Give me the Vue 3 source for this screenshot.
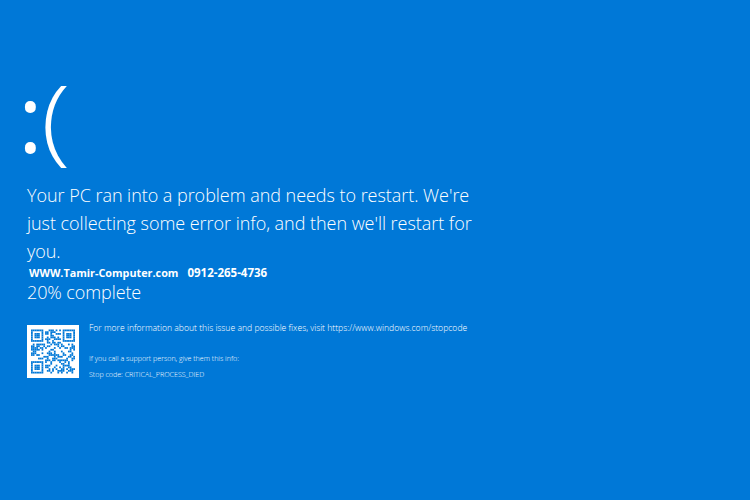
<template>
  <main class="screen">
    <div class="face"><span class="colon">:</span><span class="paren">(</span></div>
    <p class="message">Your PC ran into a problem and needs to restart. We're<br>just collecting some error info, and then we'll restart for<br>you.</p>
    <p class="contact"><span>WWW.Tamir-Computer.com</span><span class="phone">0912-265-4736</span></p>
    <p class="progress">20% complete</p>
    <section class="details">
      <div class="qr">
        <svg viewBox="0 0 25 25" shape-rendering="geometricPrecision">
          <rect v-for="c in cells" :key="c.k" :x="c.x" :y="c.y" width="1" height="1" fill="#0078d7" />
        </svg>
      </div>
      <div class="info">
        <p class="more">For more information about this issue and possible fixes, visit https://www.windows.com/stopcode</p>
        <p class="small call">If you call a support person, give them this info:</p>
        <p class="small">Stop code: CRITICAL_PROCESS_DIED</p>
      </div>
    </section>
  </main>
</template>

<script setup>
const SIZE = 25

function inFinder(x, y, ox, oy) {
  return x >= ox && x < ox + 7 && y >= oy && y < oy + 7
}

function finderOn(x, y, ox, oy) {
  const dx = x - ox
  const dy = y - oy
  if (dx === 0 || dx === 6 || dy === 0 || dy === 6) return true
  return dx >= 2 && dx <= 4 && dy >= 2 && dy <= 4
}

// not a real code, just a stable pattern with QR-like density
let seed = 20
function next() {
  seed = (seed * 1103515245 + 12345) & 0x7fffffff
  return (seed >> 16) & 1
}

const cells = []
for (let y = 0; y < SIZE; y++) {
  for (let x = 0; x < SIZE; x++) {
    let on
    const corners = [[0, 0], [18, 0], [0, 18]]
    const hit = corners.find(([ox, oy]) => inFinder(x, y, ox, oy))
    if (hit) on = finderOn(x, y, hit[0], hit[1])
    else if ((x < 8 && y < 8) || (x > 16 && y < 8) || (x < 8 && y > 16)) on = false
    else on = next() === 1
    if (on) cells.push({ k: x + '-' + y, x, y })
  }
}
</script>

<style>
html, body { margin: 0; background: #0078d7; }
</style>

<style scoped>
.screen {
  width: 750px;
  height: 500px;
  overflow: hidden;
  background: #0078d7;
  color: #fff;
  font-family: "Open Sans", "Noto Sans", sans-serif;
  font-weight: 300;
  padding: 72px 0 0 27px;
  box-sizing: border-box;
}
p { margin: 0; }
.face {
  display: flex;
  align-items: center;
  height: 90px;
  line-height: 1;
}
.colon { font-size: 94px; font-weight: 400; margin: 0 -2px 1px -9px; }
.paren { font-size: 94px; transform: scaleX(1.15); transform-origin: 0 50%; }
.message {
  font-size: 18px;
  line-height: 28px;
  margin-top: 19px;
  letter-spacing: -.04px;
}
.contact {
  display: flex;
  gap: 9px;
  margin-left: 2px;
  font-size: 10.8px;
  line-height: 16px;
  font-weight: 700;
}
.phone { font-size: 11.5px; }
.progress {
  font-size: 18px;
  line-height: 22px;
  letter-spacing: -.1px;
}
.details {
  display: flex;
  gap: 10px;
  margin-top: 22px;
}
.qr {
  width: 52px;
  height: 53px;
  background: #fff;
  padding: 4px;
  box-sizing: border-box;
  flex: none;
}
.qr svg { display: block; width: 100%; height: 100%; }
.more { font-size: 8.62px; line-height: 12px; margin-top: -3px; }
.small { font-size: 7.1px; line-height: 10px; margin-top: 6px; }
.call { margin-top: 19px; }
</style>
